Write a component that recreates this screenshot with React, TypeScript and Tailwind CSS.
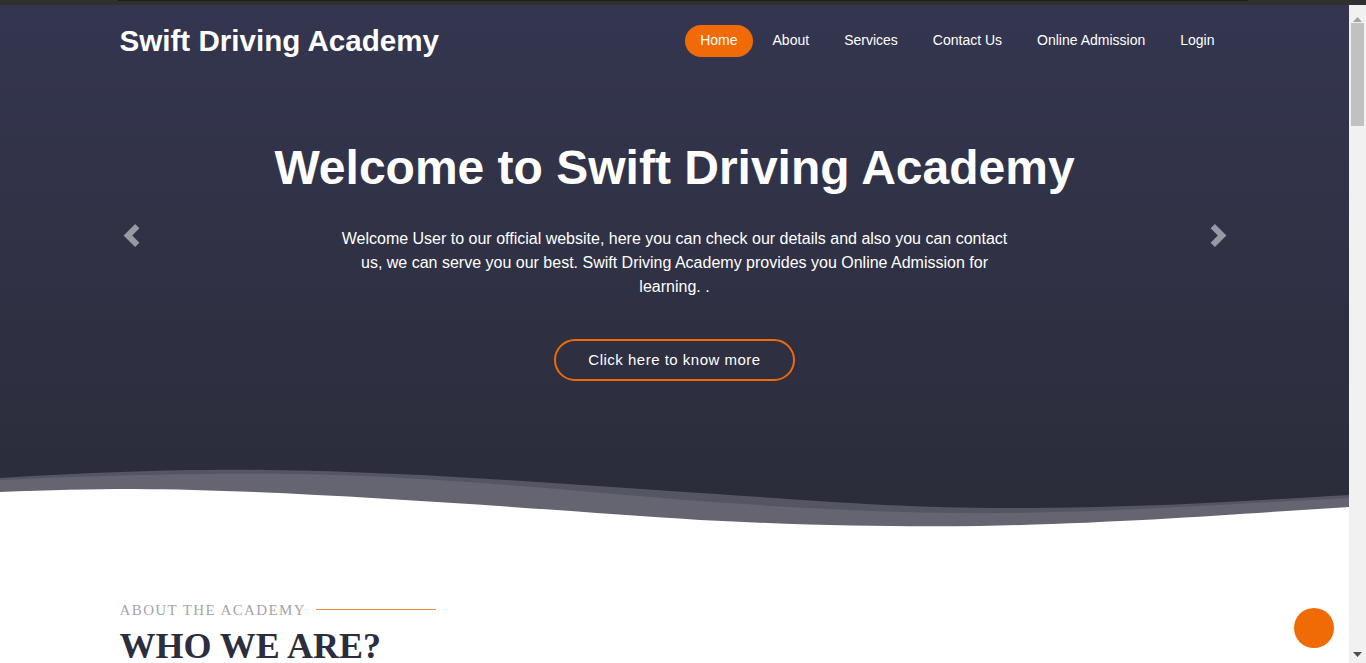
import React from 'react';

const navItems = ['Home', 'About', 'Services', 'Contact Us', 'Online Admission', 'Login'];

function PrevIcon() {
    return (
        <svg width="23" height="23" viewBox="0 0 8 8" fill="#ffffff" fillOpacity="0.5">
            <path d="M5.25 0l-4 4 4 4 1.5-1.5-2.5-2.5 2.5-2.5-1.5-1.5z" />
        </svg>
    );
}

function NextIcon() {
    return (
        <svg width="23" height="23" viewBox="0 0 8 8" fill="#ffffff" fillOpacity="0.5">
            <path d="M2.75 0l-1.5 1.5 2.5 2.5-2.5 2.5 1.5 1.5 4-4-4-4z" />
        </svg>
    );
}

function Waves() {
    return (
        <svg className="block w-full h-[70px]" viewBox="0 0 1349 70" preserveAspectRatio="none">
            <path d="M0,18 C100,12 180,9 268,10 C420,12 560,24 700,33 C820,41 900,48 1010,48 C1150,48 1260,40 1349,35 L1349,70 L0,70 Z" fill="#545664" />
            <path d="M0,20 C110,15 200,13 300,14 C450,17 580,32 700,41 C830,50 910,54 1010,53 C1150,51 1260,42 1349,38 L1349,70 L0,70 Z" fill="#646571" />
            <path d="M0,32 C50,30 90,29 134,29 C300,30 520,48 700,60 C820,66 900,67 980,66 C1130,63 1250,53 1349,47 L1349,70 L0,70 Z" fill="#ffffff" />
        </svg>
    );
}

// classic browser scrollbar, as seen in the screenshot
function Scrollbar() {
    return (
        <div className="w-[17px] shrink-0 bg-[#f1f1f1] flex flex-col items-center">
            <svg width="9" height="5" viewBox="0 0 9 5" className="mt-[12px]">
                <path d="M0,5 L4.5,0 L9,5 Z" fill="#a3a3a3" />
            </svg>
            <div className="w-[13px] h-[103px] mt-[1px] bg-[#c1c1c1]" />
            <div className="flex-1" />
            <svg width="9" height="5" viewBox="0 0 9 5" className="mb-[6px]">
                <path d="M0,0 L9,0 L4.5,5 Z" fill="#505050" />
            </svg>
        </div>
    );
}

export default function App() {
    return (
        <div className="font-['Liberation_Sans',Arial,sans-serif] bg-white h-[663px] overflow-hidden flex flex-col">
            <div className="h-[5px] shrink-0 bg-[#303030]">
                <div className="h-px mx-[118px] bg-[#1b1b1b]" />
            </div>

            <div className="flex flex-1 min-h-0">
                <div className="flex-1 relative overflow-hidden">
                    <header className="bg-gradient-to-b from-[#343650] to-[#2b2c39]">
                        <div className="max-w-[1140px] mx-auto px-[15px]">
                            <nav className="flex items-center justify-between pt-[20px]">
                                <a href="#" className="text-white font-bold text-[29.6px] leading-none">Swift Driving Academy</a>
                                <ul className="flex items-center gap-[5px]">
                                    {navItems.map((item, i) => (
                                        <li key={item}>
                                            <a
                                                href="#"
                                                className={`block px-[15px] pt-[6px] pb-[8px] text-[14px] leading-[18px] text-white rounded-full ${i === 0 ? 'bg-[#f06a06]' : ''}`}
                                            >
                                                {item}
                                            </a>
                                        </li>
                                    ))}
                                </ul>
                            </nav>

                            <div className="relative">
                                <div className="flex flex-col items-center text-center pt-[82px]">
                                    <h1 className="text-white font-bold text-[48px] leading-[1.2]">Welcome to Swift Driving Academy</h1>
                                    <p className="text-white text-[16px] leading-[24px] max-w-[680px] mt-[30px]">
                                        Welcome User to our official website, here you can check our details and also you can contact us, we can serve you our best. Swift Driving Academy provides you Online Admission for learning. .
                                    </p>
                                    <a
                                        href="#"
                                        className="mt-[40px] border-2 border-[#f06a06] rounded-full px-[32px] pt-[8px] pb-[9px] text-[15px] leading-[21px] tracking-[0.5px] text-white font-medium"
                                    >
                                        Click here to know more
                                    </a>
                                </div>
                                <button className="absolute left-0 top-[167px]"><PrevIcon /></button>
                                <button className="absolute right-0 top-[167px]"><NextIcon /></button>
                            </div>
                        </div>
                        <div className="mt-[79px]">
                            <Waves />
                        </div>
                    </header>

                    <section className="max-w-[1140px] mx-auto px-[15px] pt-[69px] pb-[200px]">
                        <div className="flex items-center gap-[10px]">
                            <span className="font-['Liberation_Serif','Times_New_Roman',serif] text-[15px] leading-[22px] tracking-[1.4px] text-[#a5a5a5] uppercase">About the Academy</span>
                            <div className="w-[120px] border-t border-[#f5893a]" />
                        </div>
                        <h2 className="mt-[4px] font-['Liberation_Serif','Times_New_Roman',serif] font-bold text-[36px] leading-[1.2] text-[#2b2e3e]">WHO WE ARE?</h2>
                    </section>

                    <a href="#" className="absolute bottom-[15px] right-[15px] w-[40px] h-[40px] rounded-full bg-[#f06a06]" />
                </div>
                <Scrollbar />
            </div>
        </div>
    );
}
